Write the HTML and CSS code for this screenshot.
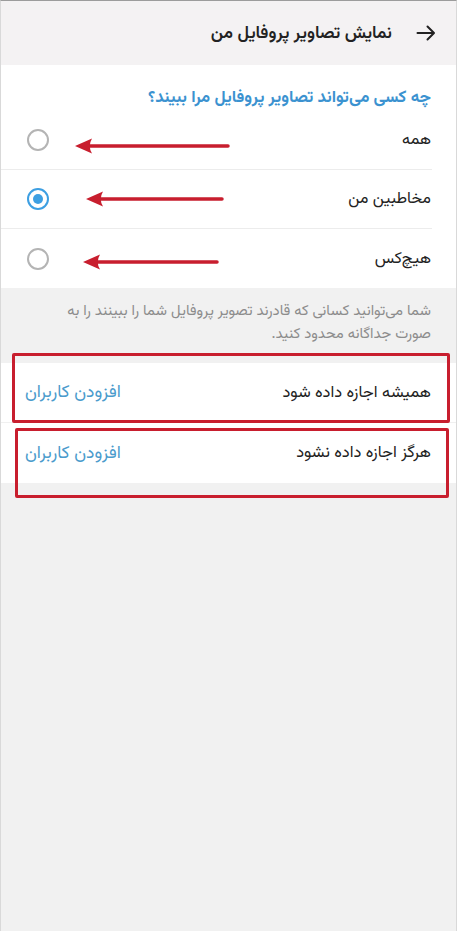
FILE: index.html
```html
<!DOCTYPE html>
<html lang="fa" dir="rtl">
<head>
<meta charset="utf-8">
<title>نمایش تصاویر پروفایل من</title>
<link rel="stylesheet" href="styles.css">
</head>
<body>
<div class="screen">
  <header class="topbar">
    <svg class="back" width="24" height="24" viewBox="0 0 24 24" aria-hidden="true">
      <path d="M3.5 12h16M13.5 5.5l6.5 6.5-6.5 6.5" fill="none" stroke="#222" stroke-width="2" stroke-linecap="round" stroke-linejoin="round"/>
    </svg>
    <h1 class="title">نمایش تصاویر پروفایل من</h1>
  </header>

  <section class="card">
    <h2 class="question">چه کسی می‌تواند تصاویر پروفایل مرا ببیند؟</h2>
    <div class="opt">
      <span class="opt-label">همه</span>
      <span class="radio"></span>
    </div>
    <div class="opt">
      <span class="opt-label">مخاطبین من</span>
      <span class="radio on"></span>
    </div>
    <div class="opt last">
      <span class="opt-label">هیچ‌کس</span>
      <span class="radio"></span>
    </div>
  </section>

  <p class="info">شما می‌توانید کسانی که قادرند تصویر پروفایل شما را ببینند را به صورت جداگانه محدود کنید.</p>

  <section class="card">
    <div class="exc sep">
      <span class="exc-label">همیشه اجازه داده شود</span>
      <span class="exc-link">افزودن کاربران</span>
    </div>
    <div class="exc">
      <span class="exc-label">هرگز اجازه داده نشود</span>
      <span class="exc-link">افزودن کاربران</span>
    </div>
  </section>

  <div class="marks" aria-hidden="true">
    <svg class="arrow a1" width="156" height="18" viewBox="0 0 156 18"><path d="M12 9H153" stroke="#c81e2e" stroke-width="3.5" stroke-linecap="round"/><path d="M0 9L17 1.5Q12.5 9 17 16.5Z" fill="#c81e2e"/></svg>
    <svg class="arrow a2" width="139" height="18" viewBox="0 0 139 18"><path d="M12 9H136" stroke="#c81e2e" stroke-width="3.5" stroke-linecap="round"/><path d="M0 9L17 1.5Q12.5 9 17 16.5Z" fill="#c81e2e"/></svg>
    <svg class="arrow a3" width="137" height="18" viewBox="0 0 137 18"><path d="M12 9H134" stroke="#c81e2e" stroke-width="3.5" stroke-linecap="round"/><path d="M0 9L17 1.5Q12.5 9 17 16.5Z" fill="#c81e2e"/></svg>
    <div class="box b1"></div>
    <div class="box b2"></div>
  </div>
</div>
</body>
</html>
```

FILE: styles.css
```css
* { box-sizing: border-box; }
html, body { margin: 0; padding: 0; }
body {
  width: 457px;
  height: 931px;
  overflow: hidden;
  background: #f1f1f1;
  font-family: "Vazirmatn", "Vazir", "DejaVu Sans", "Noto Sans", sans-serif;
  color: #222;
}
.screen {
  position: relative;
  height: 931px;
  background: #f1f1f1;
  border-top: 1px solid #9c9c9c;
  border-left: 1px solid #d9d9d9;
  border-right: 1px solid #d9d9d9;
  display: flex;
  flex-direction: column;
}
.topbar {
  height: 64px;
  background: #f4f2f3;
  display: flex;
  align-items: center;
  gap: 22px;
  padding-right: 18px;
}
.back { display: block; flex: none; }
.title {
  margin: 0;
  font-size: 17.5px;
  font-weight: 600;
  color: #222;
}
.card { background: #fff; }
.question {
  margin: 0;
  height: 46px;
  padding: 20px 25px 0 0;
  font-size: 16.8px;
  line-height: 26px;
  font-weight: 700;
  color: #3b92d0;
}
.opt {
  height: 59px;
  margin-right: 24px;
  padding-right: 1px;
  padding-left: 26px;
  display: flex;
  align-items: center;
  justify-content: space-between;
  border-bottom: 1px solid #ececec;
}
.opt.last { border-bottom: 0; }
.opt-label { font-size: 16.2px; color: #222; }
.radio {
  width: 22px;
  height: 22px;
  border-radius: 50%;
  border: 2px solid #b4b4b4;
  display: flex;
  align-items: center;
  justify-content: center;
}
.radio.on { border-color: #3d9fe2; }
.radio.on::after {
  content: "";
  width: 10px;
  height: 10px;
  border-radius: 50%;
  background: #3d9fe2;
}
.info {
  margin: 0;
  height: 75px;
  padding: 12px 25px 0 50px;
  font-size: 14.8px;
  line-height: 23px;
  color: #8c8c8c;
}
.exc {
  height: 60px;
  padding: 0 25px 0 24px;
  display: flex;
  align-items: center;
  justify-content: space-between;
}
.exc.sep { border-bottom: 1px solid #f0f0f0; }
.exc-label { font-size: 16.4px; color: #222; }
.exc-link { font-size: 17.5px; color: #4b9bcc; }

.marks { position: absolute; inset: 0; pointer-events: none; }
.arrow { position: absolute; display: block; }
.a1 { left: 74px; top: 136px; }
.a2 { left: 85px; top: 189px; }
.a3 { left: 82px; top: 252px; }
.box {
  position: absolute;
  border: 3px solid #c81e2e;
  border-radius: 2px;
}
.b1 { left: 11px; top: 352px; width: 438px; height: 70px; }
.b2 { left: 14px; top: 427px; width: 434px; height: 70px; }
```
